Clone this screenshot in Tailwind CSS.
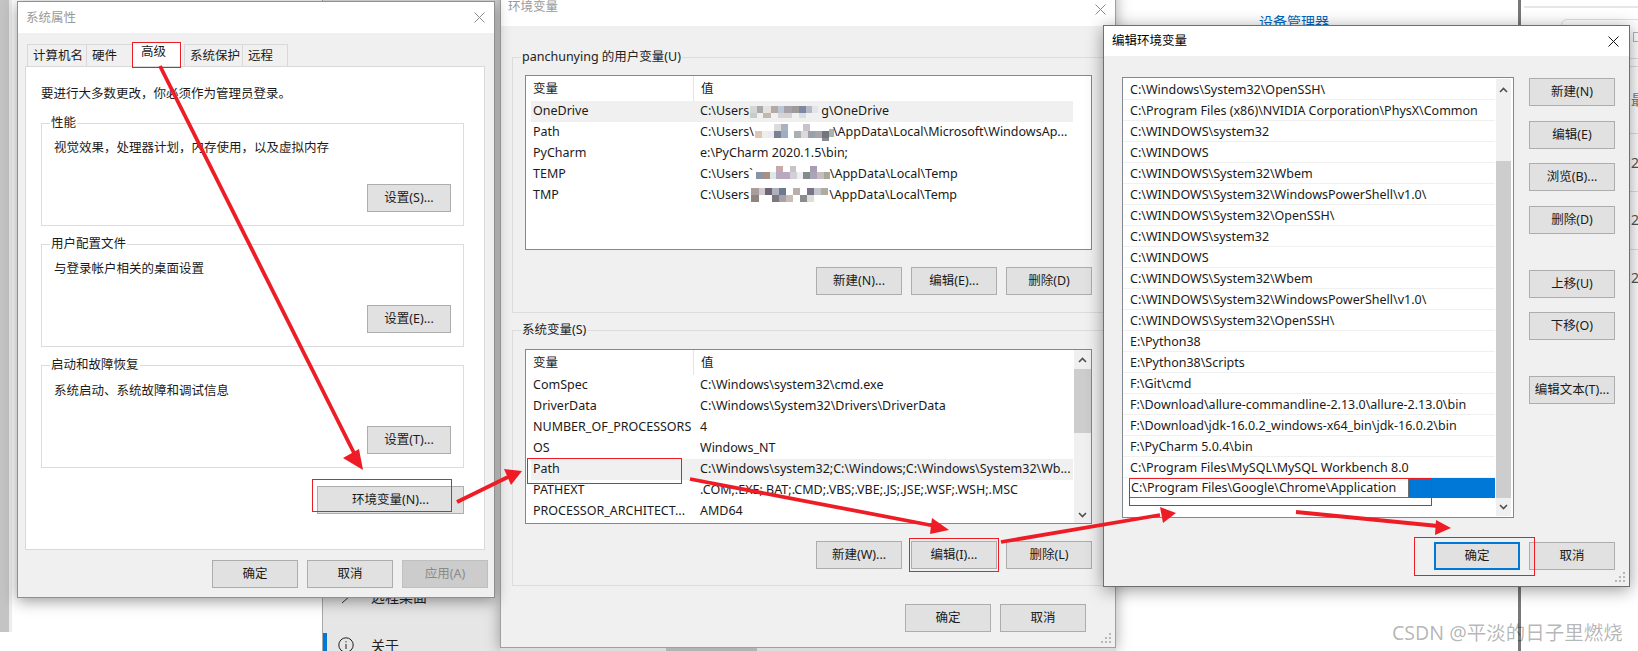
<!DOCTYPE html>
<html lang="zh-CN">
<head>
  <meta charset="UTF-8" />
  <title>环境变量</title>
  <script src="https://cdn.jsdelivr.net/npm/@tailwindcss/browser@4"></script>
</head>
<body class="bg-white">
  <div class="relative w-[1638px] h-[651px] overflow-hidden bg-white text-[12.5px] leading-[16px] text-[#1a1a1a] font-['Noto_Sans','Noto_Sans_CJK_SC',sans-serif]">

    <!-- 背景：左侧窗口边 -->
    <div class="absolute left-0 top-0 w-[9px] h-[632px] bg-[#c4c4c4]"></div>
    <div class="absolute left-[9px] top-0 w-[3px] h-[632px] bg-[#ededed]"></div>

    <!-- 背景：设置窗口侧栏 -->
    <div class="absolute left-[322px] top-0 w-[200px] h-[651px] bg-[#e6e6e6] border-l border-[#a8a8a8]">
      <svg class="absolute left-[17px] top-[590px]" width="14" height="14" viewBox="0 0 14 14" fill="none" stroke="#333" stroke-width="1"><path d="M2 13 10 6M6 6h6" /></svg>
      <div class="absolute left-[48px] top-[587px] text-[14px] leading-[20px] text-[#222]">远程桌面</div>
      <div class="absolute left-0 top-[633px] w-[4px] h-[18px] bg-[#0078d7]"></div>
      <svg class="absolute left-[15px] top-[637px]" width="16" height="16" viewBox="0 0 16 16" fill="none" stroke="#222" stroke-width="1"><circle cx="8" cy="8" r="7.2" /><path d="M8 7v5M8 4.2v1.2" /></svg>
      <div class="absolute left-[48px] top-[636px] text-[14px] leading-[20px] text-[#222]">关于</div>
    </div>

    <!-- 背景：设置窗口主体 -->
    <div class="absolute left-[1116px] top-0 w-[405px] h-[651px] bg-white border-r-[3px] border-[#777]">
      <div class="mt-[12px] ml-[143px] text-[14px] leading-[20px] text-[#0067c0]">设备管理器</div>
    </div>
    <div class="absolute left-[1524px] top-[6px] w-[114px] h-[2px] bg-[#e6e6e6]"></div>
    <div class="absolute left-[1561px] top-[19px] w-[90px] h-[40px] rounded-[6px] border border-[#e0e0e0]"></div>
    <div class="absolute left-[1633px] top-[32px] w-[10px] h-[10px] border border-[#a8b4c8]"></div>
    <div class="absolute left-[1630px] top-[66px] w-[8px] h-[1px] bg-[#e0e0e0]"></div>
    <div class="absolute left-[1630px] top-[133px] w-[8px] h-[1px] bg-[#e0e0e0]"></div>
    <div class="absolute left-[1630px] top-[191px] w-[8px] h-[1px] bg-[#e0e0e0]"></div>
    <div class="absolute left-[1630px] top-[249px] w-[8px] h-[1px] bg-[#e0e0e0]"></div>
    <div class="absolute left-[1631px] top-[91px] text-[14px] leading-[18px] text-[#777]">最</div>
    <div class="absolute left-[1631px] top-[154px] text-[14px] leading-[18px] text-[#555]">20</div>
    <div class="absolute left-[1631px] top-[211px] text-[14px] leading-[18px] text-[#555]">20</div>
    <div class="absolute left-[1631px] top-[269px] text-[14px] leading-[18px] text-[#555]">20</div>

    <!-- 环境变量 -->
    <div class="absolute left-[500px] top-[-10px] w-[616px] h-[658px] flex flex-col border border-[#a0a0a0] bg-[#f0f0f0] shadow-[0_2px_14px_rgba(0,0,0,0.35)]">
      <div class="h-[35px] bg-white flex items-end justify-between pl-[7px] pr-[9px] pb-[11px] text-[#999]">
        <span>环境变量</span>
        <svg width="11" height="11" viewBox="0 0 11 11" stroke="#8a8a8a" stroke-width="1"><path d="M.5.5l10 10M10.5.5l-10 10" /></svg>
      </div>

      <!-- 用户变量 -->
      <div class="relative ml-[11px] mt-[31px] w-[592px] h-[256px] border border-[#dcdcdc] flex flex-col">
        <div class="absolute left-[8px] top-[-9px] bg-[#f0f0f0] px-[1px] text-[#222]">panchunying 的用户变量(U)</div>
        <div class="ml-[12px] mt-[17px] w-[567px] h-[175px] border border-[#828790] bg-white">
          <div class="flex h-[25px] items-center ml-[5px] w-[542px]">
            <div class="w-[163px] h-full flex items-center pl-[2px] border-r border-[#e5e5e5]">变量</div>
            <div class="pl-[7px]">值</div>
          </div>
          <div class="flex h-[21px] items-center pb-[2px] ml-[5px] w-[542px] bg-[#f0f0f0]">
            <div class="w-[163px] pl-[2px]">OneDrive</div>
            <div class="pl-[6px] flex items-center whitespace-nowrap">C:\Users<svg class="shrink-0 overflow-visible" width="72" height="16" viewBox="0 0 72 16">
              <rect x="1" y="3" width="7" height="7" fill="#d5d5d5" /><rect x="8" y="3" width="6" height="7" fill="#a8a8a8" /><rect x="14" y="3" width="8" height="7" fill="#e5e1dd" /><rect x="22" y="3" width="7" height="7" fill="#b3a9a5" /><rect x="29" y="3" width="6" height="7" fill="#bcc6d4" /><rect x="35" y="3" width="8" height="7" fill="#a5a2ab" /><rect x="43" y="3" width="7" height="7" fill="#a0999b" /><rect x="50" y="3" width="7" height="7" fill="#7f88a0" /><rect x="57" y="3" width="6" height="7" fill="#b3bac4" /><rect x="63" y="3" width="6" height="7" fill="#e2e6ea" />
              <rect x="1" y="10" width="7" height="5" fill="#c8ccc8" /><rect x="14" y="10" width="8" height="5" fill="#c4b8ae" /><rect x="29" y="10" width="14" height="5" fill="#d8d3d3" /><rect x="50" y="10" width="7" height="5" fill="#d8dde4" />
            </svg>g\OneDrive</div>
          </div>
          <div class="flex h-[21px] items-center pb-[2px] ml-[5px] w-[542px]">
            <div class="w-[163px] pl-[2px]">Path</div>
            <div class="pl-[6px] flex items-center whitespace-nowrap">C:\Users\<svg class="shrink-0 overflow-visible" width="79" height="18" viewBox="0 0 79 18">
              <rect x="20" y="1" width="7" height="7" fill="#dcdcdc" /><rect x="27" y="1" width="7" height="7" fill="#aab2c0" /><rect x="49" y="1" width="7" height="7" fill="#c9c2cc" />
              <rect x="1" y="8" width="7" height="7" fill="#dcc7b2" /><rect x="8" y="8" width="6" height="7" fill="#f0eee8" /><rect x="14" y="8" width="6" height="7" fill="#eaeaf0" /><rect x="20" y="8" width="7" height="7" fill="#7b8193" /><rect x="27" y="8" width="7" height="7" fill="#9aaec8" /><rect x="40" y="8" width="7" height="7" fill="#a8b0b4" /><rect x="47" y="8" width="7" height="7" fill="#e0d8d8" /><rect x="54" y="8" width="7" height="7" fill="#9aa0a8" /><rect x="61" y="8" width="7" height="7" fill="#a8a4a8" /><rect x="68" y="8" width="7" height="7" fill="#707580" /><rect x="75" y="6" width="5" height="8" fill="#aab6a8" />
              <rect x="68" y="15" width="7" height="3" fill="#8a8a90" />
            </svg>\AppData\Local\Microsoft\WindowsAp...</div>
          </div>
          <div class="flex h-[21px] items-center pb-[2px] ml-[5px] w-[542px]">
            <div class="w-[163px] pl-[2px]">PyCharm</div>
            <div class="pl-[6px]">e:\PyCharm 2020.1.5\bin;</div>
          </div>
          <div class="flex h-[21px] items-center pb-[2px] ml-[5px] w-[542px]">
            <div class="w-[163px] pl-[2px]">TEMP</div>
            <div class="pl-[6px] flex items-center whitespace-nowrap">C:\Users`<svg class="shrink-0 overflow-visible" width="77" height="18" viewBox="0 0 77 18">
              <rect x="23" y="1" width="7" height="6" fill="#c8a8a8" /><rect x="37" y="1" width="6" height="6" fill="#c9c2cc" /><rect x="57" y="1" width="7" height="6" fill="#a89eb4" />
              <rect x="3" y="7" width="7" height="7" fill="#8b93a5" /><rect x="10" y="7" width="7" height="7" fill="#a88f80" /><rect x="17" y="7" width="6" height="7" fill="#dde8e8" /><rect x="23" y="7" width="14" height="7" fill="#b8a8c0" /><rect x="37" y="7" width="7" height="7" fill="#d4d0d8" /><rect x="44" y="7" width="6" height="7" fill="#efeff2" /><rect x="50" y="7" width="7" height="7" fill="#818c88" /><rect x="57" y="7" width="7" height="7" fill="#aaa4b8" /><rect x="64" y="7" width="7" height="7" fill="#c8bcc0" /><rect x="71" y="7" width="6" height="7" fill="#a8a898" />
            </svg>\AppData\Local\Temp</div>
          </div>
          <div class="flex h-[21px] items-center pb-[2px] ml-[5px] w-[542px]">
            <div class="w-[163px] pl-[2px]">TMP</div>
            <div class="pl-[6px] flex items-center whitespace-nowrap">C:\Users<svg class="shrink-0 overflow-visible" width="80" height="18" viewBox="0 0 80 18">
              <rect x="2" y="2" width="8" height="7" fill="#a89c9c" /><rect x="10" y="2" width="6" height="7" fill="#cfc8cc" /><rect x="16" y="2" width="7" height="7" fill="#6e6478" /><rect x="23" y="2" width="7" height="7" fill="#b0b0bc" /><rect x="30" y="2" width="7" height="7" fill="#6c7a90" /><rect x="44" y="2" width="7" height="7" fill="#b8b0a8" /><rect x="58" y="2" width="7" height="7" fill="#7a7488" /><rect x="65" y="2" width="7" height="7" fill="#c4c4cc" /><rect x="72" y="2" width="7" height="7" fill="#b0ac9c" />
              <rect x="2" y="9" width="8" height="7" fill="#8f8580" /><rect x="23" y="9" width="7" height="7" fill="#7c7880" /><rect x="30" y="9" width="7" height="7" fill="#a8a0a8" /><rect x="37" y="9" width="7" height="7" fill="#c8bcb4" /><rect x="51" y="9" width="7" height="7" fill="#8a8a90" /><rect x="58" y="9" width="7" height="7" fill="#e0dcd8" />
            </svg>\AppData\Local\Temp</div>
          </div>
        </div>
        <div class="ml-[303px] mt-[17px] flex gap-[9px]">
          <button class="w-[86px] h-[28px] border border-[#adadad] bg-[#e1e1e1]">新建(N)...</button>
          <button class="w-[86px] h-[28px] border border-[#adadad] bg-[#e1e1e1]">编辑(E)...</button>
          <button class="w-[86px] h-[28px] border border-[#adadad] bg-[#e1e1e1]">删除(D)</button>
        </div>
      </div>

      <!-- 系统变量 -->
      <div class="relative ml-[11px] mt-[17px] w-[592px] h-[256px] border border-[#dcdcdc] flex flex-col">
        <div class="absolute left-[8px] top-[-9px] bg-[#f0f0f0] px-[1px] text-[#222]">系统变量(S)</div>
        <div class="ml-[12px] mt-[18px] w-[567px] h-[175px] border border-[#828790] bg-white flex">
          <div class="w-[547px]">
            <div class="flex h-[25px] items-center ml-[5px] w-[542px]">
              <div class="w-[163px] h-full flex items-center pl-[2px] border-r border-[#e5e5e5]">变量</div>
              <div class="pl-[7px]">值</div>
            </div>
            <div class="flex h-[21px] items-center pb-[2px] ml-[5px] w-[542px]"><div class="w-[163px] pl-[2px]">ComSpec</div><div class="pl-[6px]">C:\Windows\system32\cmd.exe</div></div>
            <div class="flex h-[21px] items-center pb-[2px] ml-[5px] w-[542px]"><div class="w-[163px] pl-[2px]">DriverData</div><div class="pl-[6px]">C:\Windows\System32\Drivers\DriverData</div></div>
            <div class="flex h-[21px] items-center pb-[2px] ml-[5px] w-[542px]"><div class="w-[163px] pl-[2px] whitespace-nowrap">NUMBER_OF_PROCESSORS</div><div class="pl-[6px]">4</div></div>
            <div class="flex h-[21px] items-center pb-[2px] ml-[5px] w-[542px]"><div class="w-[163px] pl-[2px]">OS</div><div class="pl-[6px]">Windows_NT</div></div>
            <div class="flex h-[21px] items-center pb-[2px] ml-[5px] w-[542px] bg-[#f0f0f0]"><div class="w-[163px] pl-[2px]">Path</div><div class="pl-[6px] whitespace-nowrap">C:\Windows\system32;C:\Windows;C:\Windows\System32\Wb...</div></div>
            <div class="flex h-[21px] items-center pb-[2px] ml-[5px] w-[542px]"><div class="w-[163px] pl-[2px]">PATHEXT</div><div class="pl-[6px]">.COM;.EXE;.BAT;.CMD;.VBS;.VBE;.JS;.JSE;.WSF;.WSH;.MSC</div></div>
            <div class="flex h-[21px] items-center pb-[2px] ml-[5px] w-[542px]"><div class="w-[163px] pl-[2px] whitespace-nowrap">PROCESSOR_ARCHITECT...</div><div class="pl-[6px]">AMD64</div></div>
          </div>
          <div class="w-[17px] ml-[1px] bg-[#f0f0f0] flex flex-col items-center">
            <svg class="mt-[7px] mb-[6px] shrink-0" width="9" height="6" viewBox="0 0 9 6" fill="none" stroke="#505050" stroke-width="1.6"><path d="M1 5l3.5-3.5L8 5" /></svg>
            <div class="w-full h-[64px] bg-[#cdcdcd]"></div>
            <svg class="mt-auto mb-[5px] shrink-0" width="9" height="6" viewBox="0 0 9 6" fill="none" stroke="#505050" stroke-width="1.6"><path d="M1 1l3.5 3.5L8 1" /></svg>
          </div>
        </div>
        <div class="ml-[303px] mt-[17px] flex gap-[9px]">
          <button class="w-[86px] h-[28px] border border-[#adadad] bg-[#e1e1e1]">新建(W)...</button>
          <button class="w-[86px] h-[28px] border border-[#adadad] bg-[#e1e1e1]">编辑(I)...</button>
          <button class="w-[86px] h-[28px] border border-[#adadad] bg-[#e1e1e1]">删除(L)</button>
        </div>
      </div>

      <div class="ml-auto mr-[29px] mt-[18px] flex gap-[9px]">
        <button class="w-[86px] h-[28px] border border-[#adadad] bg-[#e1e1e1]">确定</button>
        <button class="w-[86px] h-[28px] border border-[#adadad] bg-[#e1e1e1]">取消</button>
      </div>
      <svg class="absolute right-[2px] bottom-[2px]" width="12" height="12" viewBox="0 0 12 12" fill="#b8b8b8"><rect x="8" y="0" width="2" height="2" /><rect x="4" y="4" width="2" height="2" /><rect x="8" y="4" width="2" height="2" /><rect x="0" y="8" width="2" height="2" /><rect x="4" y="8" width="2" height="2" /><rect x="8" y="8" width="2" height="2" /></svg>
    </div>
    <div class="absolute left-[500px] top-[648px] w-[616px] h-[3px] bg-[#dcdcdc]"></div>
    <div class="absolute left-[666px] top-[648px] w-[91px] h-[3px] bg-[#b4b4b4]"></div>

    <!-- 系统属性 -->
    <div class="absolute left-[17px] top-[1px] w-[478px] h-[597px] flex flex-col border border-[#8f8f8f] bg-[#f0f0f0] shadow-[0_3px_14px_rgba(0,0,0,0.4)]">
      <div class="h-[31px] bg-white flex items-center justify-between pl-[8px] pr-[9px] text-[#999]">
        <span>系统属性</span>
        <svg width="11" height="11" viewBox="0 0 11 11" stroke="#8a8a8a" stroke-width="1"><path d="M.5.5l10 10M10.5.5l-10 10" /></svg>
      </div>
      <div class="flex items-end ml-[9px] mt-[9px] h-[24px]">
        <div class="w-[60px] h-[22px] pl-[5px] flex items-center border border-b-0 border-[#d9d9d9]">计算机名</div>
        <div class="w-[46px] h-[22px] pl-[5px] flex items-center border-t border-r border-[#d9d9d9]">硬件</div>
        <div class="w-[49px] h-[24px] pl-[8px] pb-[4px] flex items-center bg-white">高级</div>
        <div class="ml-[2px] w-[59px] h-[22px] pl-[5px] flex items-center border border-b-0 border-[#d9d9d9]">系统保护</div>
        <div class="w-[45px] h-[22px] pl-[5px] flex items-center border-t border-r border-[#d9d9d9]">远程</div>
      </div>
      <div class="ml-[7px] w-[460px] h-[484px] border border-[#d9d9d9] bg-white pl-[15px] pr-[20px] pt-[19px] flex flex-col">
        <p>要进行大多数更改，你必须作为管理员登录。</p>

        <div class="relative mt-[21px] h-[103px] border border-[#dcdcdc] flex flex-col shrink-0">
          <div class="absolute left-[8px] top-[-9px] bg-white px-[1px]">性能</div>
          <p class="pl-[12px] pt-[16px]">视觉效果，处理器计划，内存使用，以及虚拟内存</p>
          <button class="ml-auto mr-[12px] mt-[28px] w-[84px] h-[28px] border border-[#adadad] bg-[#e1e1e1]">设置(S)...</button>
        </div>

        <div class="relative mt-[18px] h-[103px] border border-[#dcdcdc] flex flex-col shrink-0">
          <div class="absolute left-[8px] top-[-9px] bg-white px-[1px]">用户配置文件</div>
          <p class="pl-[12px] pt-[16px]">与登录帐户相关的桌面设置</p>
          <button class="ml-auto mr-[12px] mt-[28px] w-[84px] h-[28px] border border-[#adadad] bg-[#e1e1e1]">设置(E)...</button>
        </div>

        <div class="relative mt-[18px] h-[103px] border border-[#dcdcdc] flex flex-col shrink-0">
          <div class="absolute left-[8px] top-[-9px] bg-white px-[1px]">启动和故障恢复</div>
          <p class="pl-[12px] pt-[17px]">系统启动、系统故障和调试信息</p>
          <button class="ml-auto mr-[12px] mt-[27px] w-[84px] h-[28px] border border-[#adadad] bg-[#e1e1e1]">设置(T)...</button>
        </div>

        <button class="ml-auto mt-[18px] w-[147px] h-[28px] border border-[#adadad] bg-[#e1e1e1] shrink-0">环境变量(N)...</button>
      </div>
      <div class="ml-auto mr-[6px] mt-[10px] flex gap-[9px]">
        <button class="w-[86px] h-[28px] border border-[#adadad] bg-[#e1e1e1]">确定</button>
        <button class="w-[86px] h-[28px] border border-[#adadad] bg-[#e1e1e1]">取消</button>
        <button class="w-[86px] h-[28px] border border-[#bfbfbf] bg-[#cccccc] text-[#8a8a8a]">应用(A)</button>
      </div>
    </div>

    <!-- 编辑环境变量 -->
    <div class="absolute left-[1103px] top-[25px] w-[527px] h-[562px] flex flex-col border border-[#6f6f6f] bg-[#f0f0f0] shadow-[0_3px_16px_rgba(0,0,0,0.4)]">
      <div class="h-[30px] bg-white flex items-center justify-between pl-[8px] pr-[10px] text-black shrink-0">
        <span>编辑环境变量</span>
        <svg width="11" height="11" viewBox="0 0 11 11" stroke="#111" stroke-width="1"><path d="M.5.5l10 10M10.5.5l-10 10" /></svg>
      </div>
      <div class="flex pl-[18px] pt-[21px]">
        <div class="w-[392px] h-[441px] border border-[#828790] bg-white flex">
          <div class="w-[372px] pt-[1px]">
            <div class="h-[21px] pt-[2px] border-b border-[#f0f0f0] flex items-center pl-[7px] whitespace-nowrap">C:\Windows\System32\OpenSSH\</div>
            <div class="h-[21px] pt-[2px] border-b border-[#f0f0f0] flex items-center pl-[7px] whitespace-nowrap">C:\Program Files (x86)\NVIDIA Corporation\PhysX\Common</div>
            <div class="h-[21px] pt-[2px] border-b border-[#f0f0f0] flex items-center pl-[7px] whitespace-nowrap">C:\WINDOWS\system32</div>
            <div class="h-[21px] pt-[2px] border-b border-[#f0f0f0] flex items-center pl-[7px] whitespace-nowrap">C:\WINDOWS</div>
            <div class="h-[21px] pt-[2px] border-b border-[#f0f0f0] flex items-center pl-[7px] whitespace-nowrap">C:\WINDOWS\System32\Wbem</div>
            <div class="h-[21px] pt-[2px] border-b border-[#f0f0f0] flex items-center pl-[7px] whitespace-nowrap">C:\WINDOWS\System32\WindowsPowerShell\v1.0\</div>
            <div class="h-[21px] pt-[2px] border-b border-[#f0f0f0] flex items-center pl-[7px] whitespace-nowrap">C:\WINDOWS\System32\OpenSSH\</div>
            <div class="h-[21px] pt-[2px] border-b border-[#f0f0f0] flex items-center pl-[7px] whitespace-nowrap">C:\WINDOWS\system32</div>
            <div class="h-[21px] pt-[2px] border-b border-[#f0f0f0] flex items-center pl-[7px] whitespace-nowrap">C:\WINDOWS</div>
            <div class="h-[21px] pt-[2px] border-b border-[#f0f0f0] flex items-center pl-[7px] whitespace-nowrap">C:\WINDOWS\System32\Wbem</div>
            <div class="h-[21px] pt-[2px] border-b border-[#f0f0f0] flex items-center pl-[7px] whitespace-nowrap">C:\WINDOWS\System32\WindowsPowerShell\v1.0\</div>
            <div class="h-[21px] pt-[2px] border-b border-[#f0f0f0] flex items-center pl-[7px] whitespace-nowrap">C:\WINDOWS\System32\OpenSSH\</div>
            <div class="h-[21px] pt-[2px] border-b border-[#f0f0f0] flex items-center pl-[7px] whitespace-nowrap">E:\Python38</div>
            <div class="h-[21px] pt-[2px] border-b border-[#f0f0f0] flex items-center pl-[7px] whitespace-nowrap">E:\Python38\Scripts</div>
            <div class="h-[21px] pt-[2px] border-b border-[#f0f0f0] flex items-center pl-[7px] whitespace-nowrap">F:\Git\cmd</div>
            <div class="h-[21px] pt-[2px] border-b border-[#f0f0f0] flex items-center pl-[7px] whitespace-nowrap">F:\Download\allure-commandline-2.13.0\allure-2.13.0\bin</div>
            <div class="h-[21px] pt-[2px] border-b border-[#f0f0f0] flex items-center pl-[7px] whitespace-nowrap">F:\Download\jdk-16.0.2_windows-x64_bin\jdk-16.0.2\bin</div>
            <div class="h-[21px] pt-[2px] border-b border-[#f0f0f0] flex items-center pl-[7px] whitespace-nowrap">F:\PyCharm 5.0.4\bin</div>
            <div class="h-[21px] pt-[2px] border-b border-[#f0f0f0] flex items-center pl-[7px] whitespace-nowrap">C:\Program Files\MySQL\MySQL Workbench 8.0</div>
            <div class="h-[20px] pl-[6px] flex">
              <div class="w-[280px] h-[20px] pt-[1px] bg-white border-l border-b border-r border-[#6d6d6d] flex items-center pl-[1px] whitespace-nowrap shrink-0">C:\Program Files\Google\Chrome\Application</div>
              <div class="flex-1 bg-[#0078d7]"></div>
            </div>
          </div>
          <div class="w-[15px] ml-[1px] my-[1px] bg-[#f0f0f0] flex flex-col items-center">
            <svg class="mt-[8px] mb-[68px] shrink-0" width="9" height="6" viewBox="0 0 9 6" fill="none" stroke="#505050" stroke-width="1.6"><path d="M1 5l3.5-3.5L8 5" /></svg>
            <div class="w-full h-[337px] bg-[#cdcdcd]"></div>
            <svg class="mt-auto mb-[6px] shrink-0" width="9" height="6" viewBox="0 0 9 6" fill="none" stroke="#505050" stroke-width="1.6"><path d="M1 1l3.5 3.5L8 1" /></svg>
          </div>
        </div>
        <div class="ml-[15px] w-[86px] flex flex-col">
          <button class="h-[28px] mt-[1px] border border-[#adadad] bg-[#e1e1e1]">新建(N)</button>
          <button class="h-[28px] mt-[15px] border border-[#adadad] bg-[#e1e1e1]">编辑(E)</button>
          <button class="h-[28px] mt-[14px] border border-[#adadad] bg-[#e1e1e1]">浏览(B)...</button>
          <button class="h-[28px] mt-[15px] border border-[#adadad] bg-[#e1e1e1]">删除(D)</button>
          <button class="h-[28px] mt-[36px] border border-[#adadad] bg-[#e1e1e1]">上移(U)</button>
          <button class="h-[28px] mt-[14px] border border-[#adadad] bg-[#e1e1e1]">下移(O)</button>
          <button class="h-[28px] mt-[36px] border border-[#adadad] bg-[#e1e1e1] whitespace-nowrap">编辑文本(T)...</button>
        </div>
      </div>
      <div class="ml-auto mr-[14px] mt-[24px] flex gap-[9px]">
        <button class="w-[86px] h-[28px] border-2 border-[#0078d7] bg-[#e1e1e1]">确定</button>
        <button class="w-[86px] h-[28px] border border-[#adadad] bg-[#e1e1e1]">取消</button>
      </div>
      <svg class="absolute right-[2px] bottom-[2px]" width="12" height="12" viewBox="0 0 12 12" fill="#b8b8b8"><rect x="8" y="0" width="2" height="2" /><rect x="4" y="4" width="2" height="2" /><rect x="8" y="4" width="2" height="2" /><rect x="0" y="8" width="2" height="2" /><rect x="4" y="8" width="2" height="2" /><rect x="8" y="8" width="2" height="2" /></svg>
    </div>

    <!-- 红框和箭头标注 -->
    <svg class="absolute left-0 top-0 pointer-events-none" width="1638" height="651" viewBox="0 0 1638 651" fill="none">
      <g stroke="#ee1c25" stroke-width="1">
        <rect x="132.5" y="42.5" width="48" height="25" />
        <rect x="312.5" y="479.5" width="139" height="32" />
        <rect x="527.5" y="458.5" width="154" height="25" />
        <rect x="909.5" y="538.5" width="89" height="33" />
        <rect x="1129.5" y="478.5" width="302" height="27" />
        <rect x="1414.5" y="537.5" width="120" height="38" />
      </g>
      <g stroke="#ee1c25" stroke-width="3.8">
        <path d="M160 66 355 455" />
        <path d="M457 502 508 477" />
        <path d="M690 479 935 526" />
        <path d="M1001 542 1160 515" />
        <path d="M1296 512 1438 526" />
      </g>
      <g fill="#ee1c25">
        <path d="M363 470 343 458 359 449Z" />
        <path d="M522 471 504 469 511 485Z" />
        <path d="M949 530 932 518 930 534Z" />
        <path d="M1176 513 1160 507 1163 523Z" />
        <path d="M1451 528 1436 520 1435 535Z" />
      </g>
    </svg>

    <!-- 水印 -->
    <div class="absolute left-[1392px] top-[620px] text-[19.5px] leading-[26px] text-black/30 whitespace-nowrap">CSDN @平淡的日子里燃烧</div>
  </div>
</body>
</html>
